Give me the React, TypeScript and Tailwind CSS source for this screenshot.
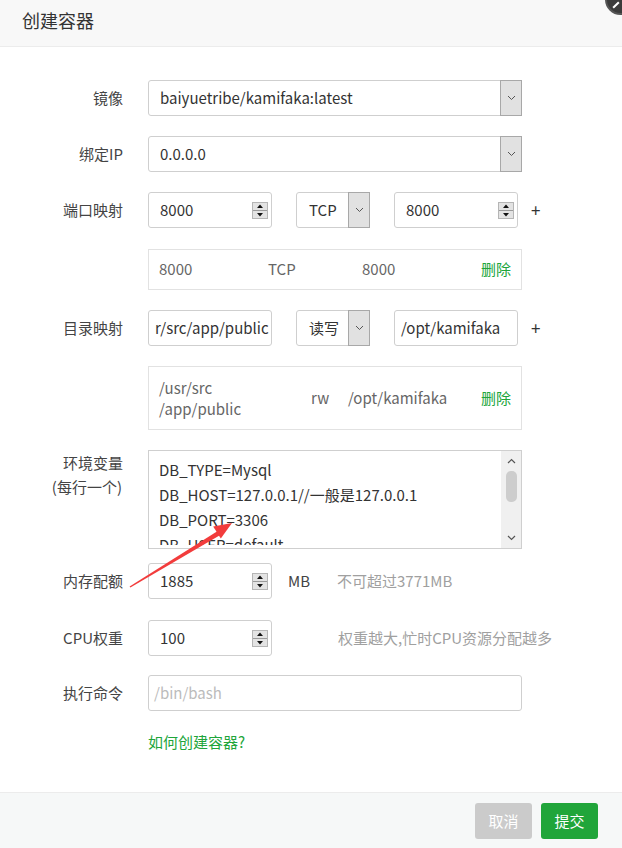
import React from "react";

const FONT = { fontFamily: '"Noto Sans CJK SC", "Noto Sans", sans-serif' };

function Spinner() {
  return (
    <svg width="16" height="17" viewBox="0 0 16 17" className="shrink-0">
      <rect x="0" y="0" width="16" height="8" fill="#e3e3e3" />
      <rect x="0" y="9" width="16" height="8" fill="#e3e3e3" />
      <rect x="0" y="8" width="16" height="1" fill="#9a9a9a" />
      <rect x="0.5" y="0.5" width="15" height="16" fill="none" stroke="#b5b5b5" />
      <path d="M8 2.5 L11 6 L5 6 Z" fill="#111" />
      <path d="M8 14.5 L11 11 L5 11 Z" fill="#111" />
    </svg>
  );
}

function Chevron() {
  return (
    <svg width="9" height="6" viewBox="0 0 9 6">
      <path d="M1 1 L4.5 4.5 L8 1" fill="none" stroke="#555" strokeWidth="1" />
    </svg>
  );
}

function Label({ children }: { children: React.ReactNode }) {
  return (
    <div className="w-[123px] shrink-0 text-right text-[15px] leading-[24px] text-[#444]">
      {children}
    </div>
  );
}

function NumInput({ value, w = "w-[124px]" }: { value: string; w?: string }) {
  return (
    <div
      className={`${w} h-[36px] shrink-0 border border-[#cfcfcf] rounded-[3px] flex items-center justify-between pl-[11px] pr-[3px] text-[15px] text-[#333]`}
    >
      <span>{value}</span>
      <Spinner />
    </div>
  );
}

function TextInput({ value, w }: { value: string; w: string }) {
  return (
    <div
      className={`${w} h-[36px] shrink-0 border border-[#cfcfcf] rounded-[3px] flex items-center pl-[6px] text-[15px] text-[#333] overflow-hidden whitespace-nowrap`}
    >
      {value}
    </div>
  );
}

function SmallSelect({ value }: { value: string }) {
  return (
    <div className="w-[74px] h-[36px] shrink-0 border border-[#cfcfcf] rounded-[3px] flex items-stretch text-[15px] text-[#333]">
      <div className="flex-1 flex items-center pl-[12px]">{value}</div>
      <div className="w-[22px] bg-[#e1e1e1] border border-[#a8a8a8] -m-[1px] ml-0 flex items-center justify-center">
        <Chevron />
      </div>
    </div>
  );
}

function WideSelect({ value }: { value: string }) {
  return (
    <div className="w-[374px] h-[36px] shrink-0 border border-[#cfcfcf] rounded-[3px] flex items-stretch text-[15px] text-[#333]">
      <div className="flex-1 flex items-center pl-[11px]">{value}</div>
      <div className="w-[22px] bg-[#e1e1e1] border border-[#a8a8a8] -m-[1px] ml-0 flex items-center justify-center">
        <Chevron />
      </div>
    </div>
  );
}

function Row({
  label,
  children,
  className = "",
}: {
  label: React.ReactNode;
  children?: React.ReactNode;
  className?: string;
}) {
  return (
    <div className={`flex items-center ${className}`}>
      <Label>{label}</Label>
      <div className="ml-[25px] flex items-center">{children}</div>
    </div>
  );
}

export default function App() {
  return (
    <div
      className="relative w-[622px] h-[848px] overflow-hidden bg-white flex flex-col"
      style={FONT}
    >
      {/* header */}
      <div className="h-[47px] shrink-0 bg-[#f8f8f8] border-b border-[#ececec] flex items-center pl-[22px]">
        <span className="text-[18px] text-[#333] leading-[24px] -mt-[6px]">创建容器</span>
      </div>

      {/* body */}
      <div className="flex-1 flex flex-col pt-[33px]">
        <Row label="镜像">
          <WideSelect value="baiyuetribe/kamifaka:latest" />
        </Row>

        <Row label="绑定IP" className="mt-[20px]">
          <WideSelect value="0.0.0.0" />
        </Row>

        <Row label="端口映射" className="mt-[20px]">
          <NumInput value="8000" />
          <div className="ml-[24px]">
            <SmallSelect value="TCP" />
          </div>
          <div className="ml-[24px]">
            <NumInput value="8000" />
          </div>
          <span className="ml-[13px] text-[17px] text-[#333]">+</span>
        </Row>

        <div className="flex mt-[21px]">
          <div className="ml-[148px] w-[374px] h-[41px] border border-[#e2e2e2] flex items-center pl-[10px] pr-[10px] text-[15px] text-[#666]">
            <span className="w-[109px]">8000</span>
            <span className="w-[94px]">TCP</span>
            <span className="flex-1">8000</span>
            <span className="text-[#20a53a]">删除</span>
          </div>
        </div>

        <Row label="目录映射" className="mt-[20px]">
          <TextInput value="r/src/app/public" w="w-[124px]" />
          <div className="ml-[24px]">
            <SmallSelect value="读写" />
          </div>
          <div className="ml-[24px]">
            <TextInput value="/opt/kamifaka" w="w-[124px]" />
          </div>
          <span className="ml-[13px] text-[17px] text-[#333]">+</span>
        </Row>

        <div className="flex mt-[20px]">
          <div className="ml-[148px] w-[374px] h-[64px] border border-[#e2e2e2] flex items-center pl-[10px] pr-[10px] text-[15px] text-[#666]">
            <span className="w-[152px] leading-[21px]">
              /usr/src
              <br />
              /app/public
            </span>
            <span className="w-[37px]">rw</span>
            <span className="flex-1">/opt/kamifaka</span>
            <span className="text-[#20a53a]">删除</span>
          </div>
        </div>

        <div className="flex mt-[20px]">
          <div className="w-[123px] shrink-0 text-right text-[15px] text-[#444] leading-[24px] pt-[1px]">
            环境变量
            <br />
            <span className="pr-[1px]">(每行一个)</span>
          </div>
          <div className="ml-[25px] w-[374px] h-[99px] border border-[#cfcfcf] flex overflow-hidden">
            <div className="flex-1 h-[94px] pl-[10px] pt-[6px] text-[15px] leading-[25px] text-[#333] whitespace-nowrap overflow-hidden">
              <div>DB_TYPE=Mysql</div>
              <div>DB_HOST=127.0.0.1//一般是127.0.0.1</div>
              <div>DB_PORT=3306</div>
              <div>DB_USER=default</div>
            </div>
            <div className="w-[20px] bg-[#f0f0f0] flex flex-col items-center">
              <div className="h-[20px] flex items-center justify-center">
                <svg width="9" height="6" viewBox="0 0 9 6">
                  <path d="M1 5 L4.5 1.5 L8 5" fill="none" stroke="#555" strokeWidth="1.2" />
                </svg>
              </div>
              <div className="w-[11px] h-[31px] rounded-[5px] bg-[#cdcdcd]" />
              <div className="flex-1" />
              <div className="h-[20px] flex items-center justify-center">
                <svg width="9" height="6" viewBox="0 0 9 6">
                  <path d="M1 1 L4.5 4.5 L8 1" fill="none" stroke="#555" strokeWidth="1.2" />
                </svg>
              </div>
            </div>
          </div>
        </div>

        <Row label="内存配额" className="mt-[14px]">
          <NumInput value="1885" />
          <span className="ml-[16px] text-[15px] text-[#444]">MB</span>
          <span className="ml-[27px] text-[15px] text-[#a0a0a0]">不可超过3771MB</span>
        </Row>

        <Row label="CPU权重" className="mt-[21px]">
          <NumInput value="100" />
          <span className="ml-[66px] text-[15px] text-[#a0a0a0]">权重越大,忙时CPU资源分配越多</span>
        </Row>

        <Row label="执行命令" className="mt-[19px]">
          <div className="w-[374px] h-[36px] border border-[#cfcfcf] rounded-[3px] flex items-center pl-[5px] text-[15px] text-[#bbb]">
            /bin/bash
          </div>
        </Row>

        <div className="mt-[20px] pl-[148px] text-[15px] leading-[22px] text-[#20a53a]">
          如何创建容器?
        </div>
      </div>

      {/* footer */}
      <div className="h-[56px] shrink-0 bg-[#f6f8f8] border-t border-[#ececec] flex items-start justify-end gap-[9px] pr-[24px] pt-[10px]">
        <button className="w-[57px] h-[36px] rounded-[3px] bg-[#cbcbcb] text-white text-[15px]">
          取消
        </button>
        <button className="w-[57px] h-[36px] rounded-[3px] bg-[#20a53a] text-white text-[15px]">
          提交
        </button>
      </div>

      {/* close button, partly off-screen */}
      <div className="absolute left-[605px] top-[-16px] w-[31px] h-[31px] rounded-full bg-[#3b3b3b] border-[2px] border-[#555]">
        <div className="absolute left-[5px] top-[18px] w-[8px] h-[2px] bg-white rotate-[-45deg]" />
      </div>

      {/* red annotation arrow */}
      <svg
        className="absolute left-0 top-0 pointer-events-none"
        width="622"
        height="848"
        viewBox="0 0 622 848"
      >
        <polygon
          points="130.4,587.6 129.6,586.4 217.7,530.9 220.3,535.1"
          fill="#f23c3c"
        />
        <polygon points="232,523 220.8,538.5 213.2,526.5" fill="#f23c3c" />
      </svg>
    </div>
  );
}
